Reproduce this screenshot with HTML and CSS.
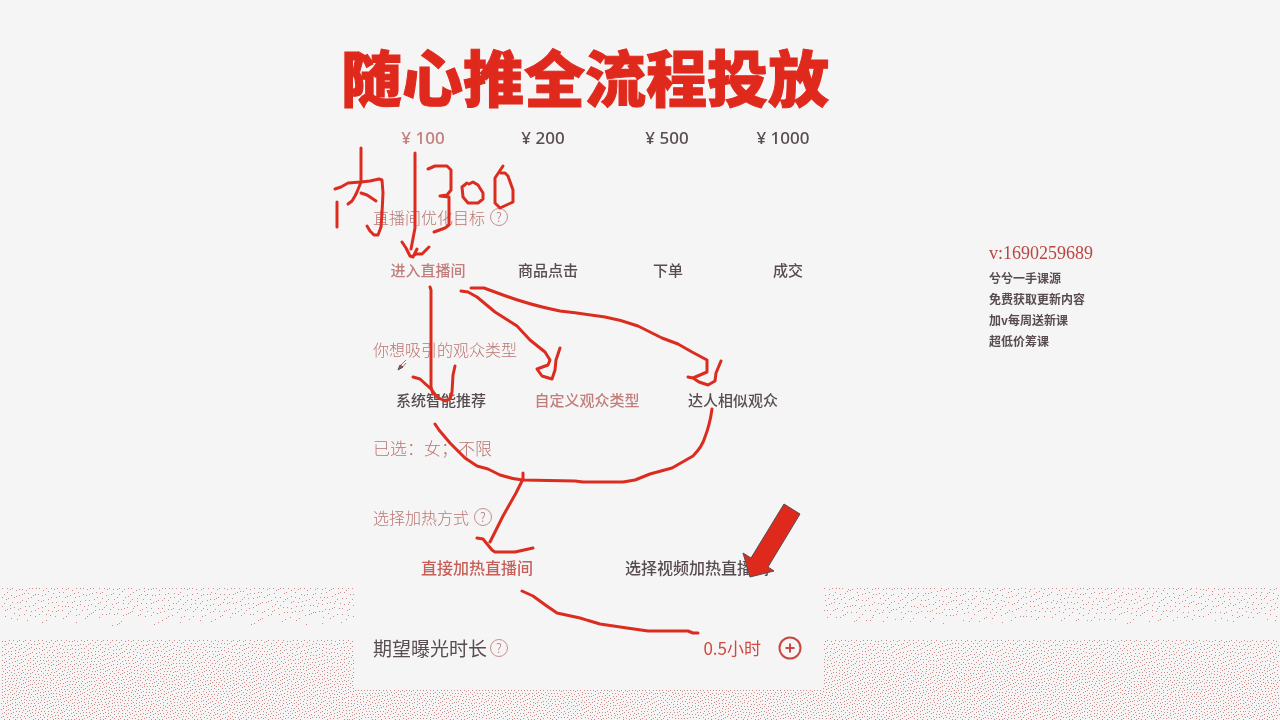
FILE: index.html
```html
<!DOCTYPE html>
<html lang="zh-CN">
<head>
<meta charset="utf-8">
<meta name="viewport" content="width=device-width, initial-scale=1">
<title>随心推全流程投放</title>
<link rel="stylesheet" href="styles.css">
</head>
<body>
<div class="page">
  <canvas class="grain" aria-hidden="true"></canvas>
  <main class="panel">
    <h1 class="title">随心推全流程投放</h1>
    <div class="options prices">
      <button class="option active">¥ 100</button>
      <button class="option">¥ 200</button>
      <button class="option">¥ 500</button>
      <button class="option">¥ 1000</button>
    </div>
    <section class="group">
      <h2 class="label">直播间优化目标 <button class="help" aria-label="说明">?</button></h2>
      <div class="options goals">
        <button class="option active">进入直播间</button>
        <button class="option">商品点击</button>
        <button class="option">下单</button>
        <button class="option">成交</button>
      </div>
    </section>
    <section class="group audience">
      <h2 class="label">你想吸引的观众类型</h2>
      <div class="options types">
        <button class="option">系统智能推荐</button>
        <button class="option active">自定义观众类型</button>
        <button class="option">达人相似观众</button>
      </div>
      <p class="selected">已选：女；不限</p>
    </section>
    <section class="group heating">
      <h2 class="label">选择加热方式 <button class="help" aria-label="说明">?</button></h2>
      <div class="options methods">
        <button class="option strong">直接加热直播间</button>
        <button class="option">选择视频加热直播间</button>
      </div>
    </section>
    <section class="duration">
      <h2 class="label dark">期望曝光时长 <button class="help" aria-label="说明">?</button></h2>
      <span class="hours">0.5小时</span>
      <button class="plus" aria-label="增加时长">
        <svg viewBox="0 0 24 24" aria-hidden="true"><circle cx="12" cy="12" r="10.5"/><path d="M12 7.500v9M7.500 12h9"/></svg>
      </button>
    </section>
    <svg class="ink" viewBox="355 0 494 720" aria-hidden="true">
      <g class="stroke">
        <path d="M361 148V182L357 192 355 196 352 201 348 204M361 193L367 195 376 201"/>
        <path d="M335 189L341 187 348 183 361 182 370 181 379 179 382 180 383 193 382 213 381 227 378 235 374 235 370 231 367 226M337 202V227"/>
        <path d="M415 153V228L411 249M402 242L406 248 410 256 413 257 417 249M413 256L416 254 422 254 429 247"/>
        <path d="M428 169L435 166 447 166 451 170V190L447 195 440 196 449 197V225L445 228 434 232"/>
        <path d="M467 183L462 187 463 197 468 203 478 203 483 199V193L478 185 473 182 469 184"/>
        <path d="M503 166L495 178V203L500 208 513 202V190L508 176 505 173 501 173"/>
        <path d="M430 287L431 290V387L433 394M413 377L420 379 431 389 437 397 445 401 450 399 452 392 453 375 455 366"/>
        <path d="M461 291L468 292 477 297 495 312 517 326 530 340 545 352 550 360 548 365 537 369 542 376 552 379 555 370 556 360 560 348"/>
        <path d="M471 288H484L503 295Q530 305 560 311Q585 314 605 317Q622 320 638 326L662 338 678 344 692 352 707 360V372L693 378 688 377M693 378L699 382 708 385 715 381 716 373 721 361"/>
        <path d="M435 424L439 430 450 443 465 458 477 466 488 469 500 475Q512 479 523 480L575 481 583 482H623L635 480 650 474 672 468 693 456Q702 447 705 437Q710 424 712 409"/>
        <path d="M523 473V479L516 493 503 516 490 542M477 538L483 539 492 550 495 552H515L533 548"/>
        <path d="M522 591L533 596Q545 605 557 613L580 618 600 624 627 628 648 631H688L693 633H698"/>
      </g>
      <path class="pointer" d="M784 504L800 514 768 567 774 571 750 577 743 553 751 558Z"/>
      <g class="pen"><path d="M406 360L400 366M406 363L402 368"/><path class="nib" d="M398 370L400 365 403 367Z"/></g>
    </svg>
  </main>
  <aside class="contact">
    <p class="account">v:1690259689</p>
    <p>兮兮一手课源</p>
    <p>免费获取更新内容</p>
    <p>加v每周送新课</p>
    <p>超低价筹课</p>
  </aside>
</div>
<script src="grain.js"></script>
</body>
</html>
```

FILE: styles.css
```css
* { box-sizing: border-box; }

body {
  margin: 0;
  background: #f5f5f5;
  color: #584c50;
  font-family: "Noto Sans CJK SC", "Noto Sans", sans-serif;
}

h1, h2, p { margin: 0; }

button {
  padding: 0;
  border: 0;
  background: none;
  color: inherit;
  font: inherit;
}

.page {
  position: relative;
  display: grid;
  grid-template-columns: minmax(0, 355fr) 494px minmax(250px, 431fr);
  min-height: 100vh;
  overflow: hidden;
}

.grain {
  position: absolute;
  inset: 0;
  width: 100%;
  height: 100%;
}

.panel {
  position: relative;
  grid-column: 2;
  padding: 36px 0 32px;
}

.title {
  margin-left: -14px;
  color: #e0291d;
  font-size: 61px;
  font-weight: 900;
  line-height: 80px;
  white-space: nowrap;
  -webkit-text-stroke: 1px #e0291d;
}

.options {
  display: grid;
  justify-items: center;
  line-height: 24px;
  font-size: 15px;
  font-weight: 500;
  white-space: nowrap;
}

.prices {
  grid-template-columns: 120px 120px 128px 104px;
  margin: 10px 0 0 8px;
  font-family: "Noto Sans", sans-serif;
  font-size: 17px;
}

.goals {
  grid-template-columns: repeat(4, 120px);
  margin: 29px 0 0 13px;
}

.types {
  grid-template-columns: repeat(3, 146px);
  margin: 27px 0 0 13px;
}

.methods {
  grid-template-columns: repeat(2, 220px);
  margin: 26px 0 0 12px;
  font-size: 16px;
}

.active { color: #c07f7c; }
.strong { color: #c8605a; }

.group { margin-top: 55px; }
.heating { margin-top: 45px; }

.label {
  display: flex;
  align-items: center;
  gap: 5px;
  padding-left: 18px;
  color: #b97572;
  font-size: 16px;
  font-weight: 300;
  line-height: 24px;
}

.label.dark {
  flex: 1;
  gap: 3px;
  color: #584c50;
  font-size: 19px;
  font-weight: 400;
}

.help {
  width: 18px;
  height: 18px;
  border: 1px solid #c48f8d;
  border-radius: 50%;
  color: #b97572;
  font-size: 13px;
  font-weight: 300;
  line-height: 16px;
}

.selected {
  margin-top: 24px;
  padding-left: 18px;
  color: #b97572;
  font-size: 17px;
  font-weight: 300;
  line-height: 24px;
}

.duration {
  display: flex;
  align-items: center;
  margin-top: 57px;
  padding-right: 47px;
}

.hours {
  color: #cf4940;
  font-size: 17px;
  line-height: 24px;
}

.plus {
  width: 24px;
  height: 24px;
  margin-left: 17px;
}

.plus svg {
  display: block;
  fill: none;
  stroke: #c9483f;
  stroke-width: 2;
}

.ink {
  position: absolute;
  top: 0;
  left: 0;
  width: 100%;
  overflow: visible;
  pointer-events: none;
}

.stroke {
  fill: none;
  stroke: #dc2c20;
  stroke-width: 3;
  stroke-linecap: round;
  stroke-linejoin: round;
}

.pointer {
  fill: #e0291d;
  stroke: #584c50;
}

.pen { fill: none; stroke: #a5736f; }
.nib { fill: #b8443c; stroke: #584c50; }

.contact {
  position: relative;
  padding: 243px 0 0 140px;
  font-size: 12px;
  font-weight: 700;
  line-height: 21px;
}

.account {
  margin-bottom: 3px;
  color: #bb4640;
  font-family: "Liberation Serif", serif;
  font-size: 18px;
  font-weight: 400;
}
```

FILE: grain.js
```js
const canvas = document.querySelector(".grain");
const panel = document.querySelector(".panel");

// Share of dotted pixels at a given point of the backdrop.
function density(x, y, left, right) {
  if (x >= left && x < right && y < 688) return 0;
  if (y >= 588 && y < 626) return 0.05 * Math.min(1, (626 - y) / 16);
  if (y >= 640) return Math.min(0.115, 0.08 + (y - 640) * 0.0008);
  return 0;
}

// Repeatable noise, so every repaint gives the same grain.
function noise(x, y) {
  const n = Math.sin(x * 12.9898 + y * 78.233) * 43758.5453;
  return n - Math.floor(n) - 0.5;
}

function paint() {
  const w = canvas.width = canvas.clientWidth;
  const h = canvas.height = canvas.clientHeight;
  const ctx = canvas.getContext("2d");
  const left = panel.offsetLeft;
  const right = left + 467;
  let row = new Float32Array(w + 2);
  ctx.fillStyle = "#cb8c89";
  for (let y = 580; y < h; y++) {
    const next = new Float32Array(w + 2);
    for (let x = 0; x < w; x++) {
      const d = density(x, y, left, right);
      if (d === 0) continue;
      const value = d + row[x + 1];
      const spread = y < 640 ? 0.4 : 0.12;
      const on = value > 0.5 + noise(x, y) * spread;
      if (on) ctx.fillRect(x, y, 1, 1);
      const error = value - (on ? 1 : 0);
      row[x + 2] += error * 7 / 16;
      next[x] += error * 3 / 16;
      next[x + 1] += error * 5 / 16;
      next[x + 2] += error / 16;
    }
    // Starts each band with dots already due, so its top edge is crisp.
    if (y === 587 || y === 639) next.fill(0.2);
    row = next;
  }
}

paint();
window.addEventListener("resize", paint);
```
